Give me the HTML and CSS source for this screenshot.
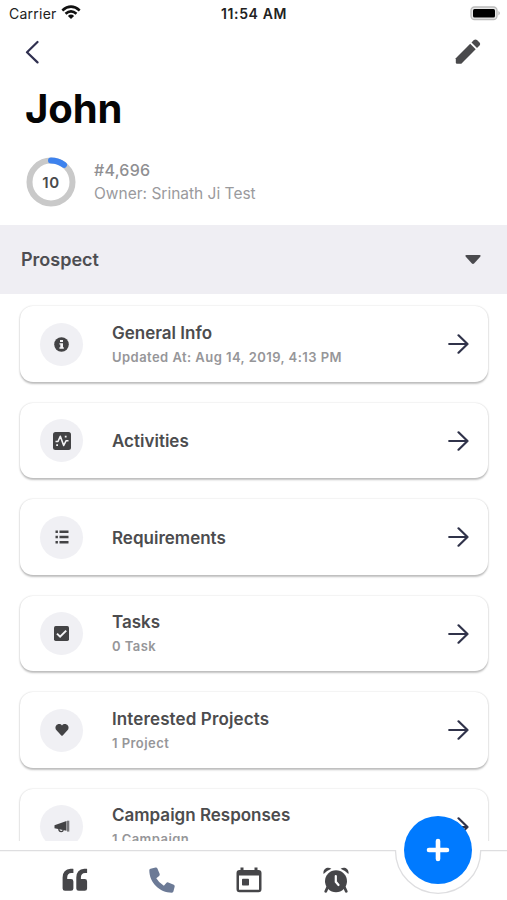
FILE: index.html
```html
<!DOCTYPE html>
<html lang="en">
<head>
<meta charset="utf-8">
<title>John</title>
<link rel="stylesheet" href="styles.css">
</head>
<body>
<div class="screen">
  <div class="status">
    <span class="carrier">Carrier</span>
    <svg class="wifi" width="20" height="15" viewBox="0 0 20 15" fill="none" stroke="#111" stroke-width="2.6"><path d="M1.3 5.4Q10 -2.2 18.700 5.400"/><path d="M4.500 8.800Q10 4 15.500 8.800"/><path d="M10 14L6.900 10.900Q10 8.300 13.100 10.900Z" fill="#111" stroke="none"/></svg>
    <span class="clock">11:54 AM</span>
    <svg class="battery" width="31" height="15" viewBox="0 0 31 15"><rect x="1" y="1" width="26" height="12.500" rx="3.500" fill="#e8e8e8" stroke="#bbb" stroke-width="1.300"/><rect x="3" y="3" width="22" height="8.500" rx="1.500" fill="#000"/><path d="M28.500 5Q31 7.200 28.500 9.500Z" fill="#aaa"/></svg>
  </div>
  <header class="toolbar">
    <svg width="16" height="24" viewBox="0 0 16 24" fill="none" stroke="#303050" stroke-width="2.200" stroke-linecap="round" stroke-linejoin="round"><path d="M14.500 2L4 12.200L14.500 22.400"/></svg>
    <svg width="26" height="26" viewBox="0 0 26 26" fill="#4a4a4c"><path d="M.8 19.200L15.200 4.800L20.700 10.300L6.300 24.700H2Q.8 24.700 .8 23.500Z"/><path d="M16.500 3.500L18.900 1.100Q20.500 -.1 22 1.100L24.500 3.600Q25.800 5 24.500 6.500L22 9Z"/></svg>
  </header>
  <h1>John</h1>
  <section class="profile">
    <div class="score">
      <svg width="50" height="50" viewBox="0 0 50 50" fill="none" stroke-width="6"><circle cx="25" cy="25" r="21.500" stroke="#c9c9c9"/><path d="M25 3.500A21.500 21.500 0 0 1 38 7.900" stroke="#3d82ee" stroke-linecap="round"/></svg>
      <span>10</span>
    </div>
    <div class="who"><div class="num">#4,696</div><div class="owner">Owner: Srinath Ji Test</div></div>
  </section>
  <div class="stage">
    <span>Prospect</span>
    <svg width="16" height="10" viewBox="0 0 16 10" fill="#4a4a4e"><path d="M1.500 0H14.500Q16.500 .3 15 2L9.300 8.300Q8 9.600 6.700 8.300L1 2Q-.5 .3 1.500 0Z"/></svg>
  </div>
  <main class="list">
    <div class="card">
      <div class="badge"><svg width="15" height="15" viewBox="0 0 15 15"><circle cx="7.500" cy="7.500" r="7.300" fill="#434345"/><path d="M6 2.900H9V5.100H6ZM5.400 6.200H9V10.300H9.800V11.800H5.400V10.300H6.300V7.600H5.400Z" fill="#f4f4f6"/></svg></div>
      <div class="text"><div class="title">General Info</div><div class="sub">Updated At: Aug 14, 2019, 4:13 PM</div></div>
      <svg class="arrow" width="21" height="20" viewBox="0 0 21 20"><path d="M1.200 10H19.500M10.500 1.300L19.500 10L10.500 18.700"/></svg>
    </div>
    <div class="card">
      <div class="badge"><svg width="18" height="18" viewBox="0 0 18 18"><rect width="18" height="18" rx="2.500" fill="#434345"/><path d="M2.500 9.500H5L7.300 4.300L10.700 13.500L13 8.800H15.500" fill="none" stroke="#f4f4f6" stroke-width="1.600" stroke-linejoin="round"/><path d="M11.800 3.700H13.600V5.500H11.800ZM3.200 12.200H5V14H3.200Z" fill="#f4f4f6"/></svg></div>
      <div class="text"><div class="title">Activities</div></div>
      <svg class="arrow" width="21" height="20" viewBox="0 0 21 20"><path d="M1.200 10H19.500M10.500 1.300L19.500 10L10.500 18.700"/></svg>
    </div>
    <div class="card">
      <div class="badge"><svg width="14" height="14" viewBox="0 0 14 14" fill="none" stroke="#434345" stroke-width="2.400"><path d="M.5 1.700H2.900M.5 7H2.900M.5 12.300H2.900M4.500 1.700H13.500M4.500 7H13.500M4.500 12.300H13.500"/></svg></div>
      <div class="text"><div class="title">Requirements</div></div>
      <svg class="arrow" width="21" height="20" viewBox="0 0 21 20"><path d="M1.200 10H19.500M10.500 1.300L19.500 10L10.500 18.700"/></svg>
    </div>
    <div class="card">
      <div class="badge"><svg width="15" height="15" viewBox="0 0 15 15"><rect width="15" height="15" rx="1.700" fill="#434345"/><path d="M3 7.600L6.100 10.700L12.200 4.600" fill="none" stroke="#f4f4f6" stroke-width="2"/></svg></div>
      <div class="text"><div class="title">Tasks</div><div class="sub">0 Task</div></div>
      <svg class="arrow" width="21" height="20" viewBox="0 0 21 20"><path d="M1.200 10H19.500M10.500 1.300L19.500 10L10.500 18.700"/></svg>
    </div>
    <div class="card">
      <div class="badge"><svg width="14" height="12" viewBox="0 0 14 12" fill="#434345"><path d="M7 1.600C8.500 -.6 11.500 -.2 12.800 1.500C14.100 3.200 13.600 5 12.500 6.200L7.700 11.400Q7 12 6.300 11.400L1.500 6.200C.4 5 -.1 3.200 1.200 1.500C2.500 -.2 5.500 -.6 7 1.600Z"/></svg></div>
      <div class="text"><div class="title wide">Interested Projects</div><div class="sub">1 Project</div></div>
      <svg class="arrow" width="21" height="20" viewBox="0 0 21 20"><path d="M1.200 10H19.500M10.500 1.300L19.500 10L10.500 18.700"/></svg>
    </div>
    <div class="card">
      <div class="badge"><svg width="16" height="13" viewBox="0 0 16 13" fill="#434345"><path d="M.5 5.300L12.500 1V10.800L.5 8.200Z"/><path d="M13 .7H15.300V11.600H13Z" fill="#77777a"/><path d="M4.800 9Q5 11.700 7.200 11.700Q9 11.700 9.200 10" fill="none" stroke="#434345" stroke-width="1.300"/></svg></div>
      <div class="text"><div class="title">Campaign Responses</div><div class="sub">1 Campaign</div></div>
      <svg class="arrow" width="21" height="20" viewBox="0 0 21 20"><path d="M1.200 10H19.500M10.500 1.300L19.500 10L10.500 18.700"/></svg>
    </div>
  </main>
  <nav class="tabs">
    <svg class="edge" width="507" height="50" viewBox="0 0 507 50" fill="none" stroke="#dedee0" stroke-width="1.300"><path d="M0 .7H395.500A42.600 42.600 0 0 0 480.700 .7H507"/></svg>
    <svg width="26" height="24" viewBox="0 0 26 24" fill="#464649"><path id="quote" d="M11.400 1V5H9.400Q5.300 5.100 5.200 9.500V11H9Q11.400 11 11.400 13.400V20.500Q11.400 22.700 9 22.700H3Q.6 22.700 .6 20.500V9.500Q.8 1.300 8.600 .8H11Z"/><use href="#quote" x="13.700"/></svg>
    <svg width="26" height="26" viewBox="0 0 26 26" fill="#6c7a96"><path d="M1.500 1.800L6.600 .5Q7.900 .3 8.400 1.400L10.700 6.900Q11 8.100 10.100 8.900L7.300 11.300Q9.900 16 14.900 18.700L17.300 15.900Q18.100 14.900 19.300 15.400L24.800 17.700Q25.900 18.300 25.700 19.400L24.400 24.600Q24.100 25.700 22.900 25.700C10.500 25.600 .4 15.600 .3 3.200Q.3 2.100 1.500 1.800Z"/></svg>
    <svg width="26" height="26" viewBox="0 0 26 26"><path d="M4.500 .5H7.500V3H18.500V.5H21.500V3H22.500Q25.500 3 25.500 6V22Q25.500 25.300 22.500 25.300H3.500Q.5 25.300 .5 22V6Q.5 3 3.500 3H4.500ZM3 8.500V22.700H23V8.500Z" fill="#464649" fill-rule="evenodd"/><rect x="6" y="11.800" width="7" height="6.800" rx=".8" fill="#464649"/></svg>
    <svg width="26" height="26" viewBox="0 0 26 26"><g fill="#464649"><circle cx="13" cy="14.200" r="11"/><path d="M.6 7C-.6 2.200 4.500 -1.200 8.400 1.800Q3.500 3.800 .6 7ZM25.400 7C26.600 2.200 21.500 -1.200 17.600 1.800Q22.500 3.800 25.400 7Z"/><path d="M4.500 20.500L2.800 24.300M21.500 20.500L23.200 24.300" stroke="#464649" stroke-width="2.800" stroke-linecap="round"/></g><path d="M12.800 9V14.800L15.500 18" stroke="#fff" stroke-width="2.200" stroke-linecap="round" fill="none"/></svg>
    <button class="add" aria-label="Add"><svg width="24" height="24" viewBox="0 0 24 24" stroke="#fff" stroke-width="4.600" stroke-linecap="round"><path d="M12 3V21M3 12H21"/></svg></button>
  </nav>
</div>
</body>
</html>
```
FILE: styles.css
```css
* { box-sizing: border-box; }
body { margin: 0; background: #fff; font-family: Inter, "Liberation Sans", sans-serif; }
svg { display: block; flex: none; }
.screen { width: 507px; height: 900px; overflow: hidden; display: flex; flex-direction: column; }
.status { height: 28px; flex: none; display: grid; grid-template-columns: 47px 174px 1fr 31px; align-items: center; padding: 0 6px 0 9px; color: #222; white-space: nowrap; }
.carrier { font-size: 14px; letter-spacing: .25px; margin-top: -1px; }
.wifi { margin: -3px 0 0 5px; }
.clock { font-size: 14px; font-weight: 600; letter-spacing: .62px; margin: -1px 0 0 -9px; }
.battery { margin-top: -2px; }
.toolbar { height: 48px; flex: none; display: flex; justify-content: space-between; align-items: center; padding: 0 26px 0 23px; }
h1 { margin: 0; height: 66px; flex: none; padding-left: 25px; font-size: 40px; line-height: 66px; font-weight: 700; letter-spacing: -.1px; color: #050505; }
.profile { height: 83px; flex: none; display: flex; gap: 18px; padding: 15px 0 0 26px; }
.score { width: 50px; height: 50px; display: grid; }
.score > * { grid-area: 1 / 1; }
.score span { place-self: center; font-size: 15px; font-weight: 600; letter-spacing: .6px; color: #4a4a4c; }
.who { color: #8f8f92; line-height: 24px; padding-top: 1px; white-space: nowrap; }
.num { font-size: 16px; font-weight: 500; letter-spacing: .25px; }
.owner { font-size: 15.500px; letter-spacing: 0; color: #9a9a9d; }
.stage { height: 69px; flex: none; background: #efeef3; display: flex; align-items: center; justify-content: space-between; padding: 0 26px 0 21px; font-size: 18px; font-weight: 600; color: #4d4d51; }
.list { height: 547px; flex: none; overflow: hidden; padding: 12.400px 19px 0 20px; display: flex; flex-direction: column; gap: 21px; }
.card { height: 75.500px; flex: none; border-radius: 13px; background: #fff; box-shadow: 0 1.500px 2px rgba(0,0,0,.24), 0 0 2px rgba(0,0,0,.13); display: flex; align-items: center; padding: 0 19px 0 20px; }
.badge { width: 43px; height: 43px; border-radius: 50%; background: #f0f0f4; display: grid; place-items: center; }
.text { flex: 1; margin: 1px 0 0 29px; white-space: nowrap; }
.title { font-size: 17px; line-height: 24px; font-weight: 600; color: #4c4c4e; }
.title.wide { letter-spacing: .12px; }
.sub { font-size: 13px; line-height: 24px; font-weight: 600; letter-spacing: .45px; color: #969699; }
.arrow { fill: none; stroke: #30334a; stroke-width: 2.200; stroke-linecap: round; stroke-linejoin: round; }
.tabs { position: relative; height: 50px; margin-top: 9px; flex: none; display: flex; align-items: center; gap: 61px; padding: 10px 0 0 62px; }
.edge { position: absolute; left: 0; top: 0; }
.add { position: absolute; left: 404px; top: -34px; width: 68px; height: 68px; border: 0; border-radius: 50%; background: #007aff; display: grid; place-items: center; padding: 0; }
```
